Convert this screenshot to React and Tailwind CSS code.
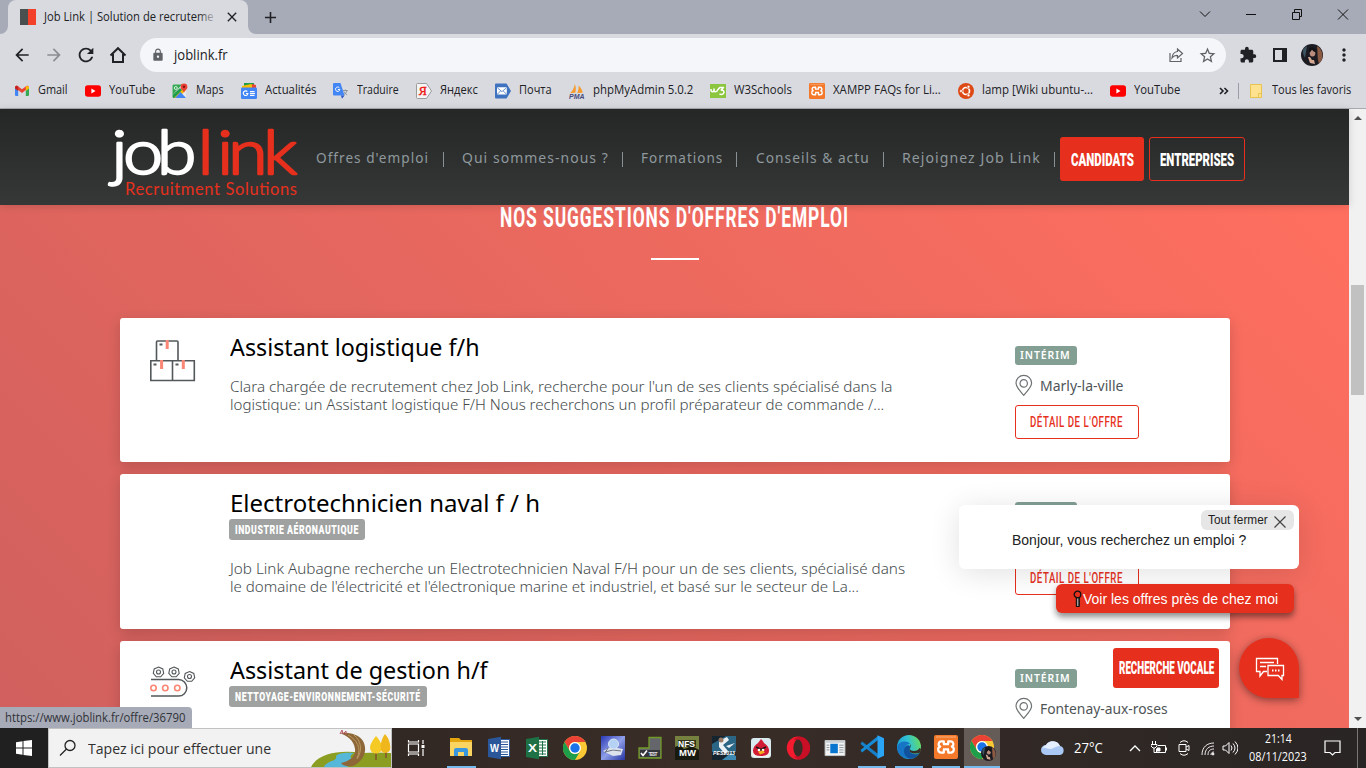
import React, { useLayoutEffect, useRef, useState } from "react";
import { MdArrowBack, MdArrowForward, MdRefresh, MdLock, MdStarBorder, MdExtension, MdMoreVert, MdAdd, MdClose } from "react-icons/md";

// Squeezes or stretches one line of text to the width of its box.
function Fit({ className = "", children }) {
  const box = useRef(null);
  const line = useRef(null);
  const [ratio, setRatio] = useState(1);
  useLayoutEffect(() => {
    setRatio(box.current.clientWidth / line.current.offsetWidth);
  }, [children]);
  return (
    <span ref={box} className={"block shrink-0 " + className}>
      <span ref={line} className="inline-block origin-left whitespace-nowrap" style={{ transform: `scaleX(${ratio})` }}>
        {children}
      </span>
    </span>
  );
}

const ChromeIcon = ({ className }) => (
  <svg viewBox="0 0 24 24" className={className}>
    <circle cx="12" cy="12" r="12" fill="#fcc934" />
    <path d="M1.6 6A12 12 0 0 1 22.4 6H12a6 6 0 0 0-5.2 9z" fill="#ea4335" />
    <path d="M1.6 6A12 12 0 0 0 12 24l5.2-9A6 6 0 0 1 6.8 15z" fill="#1e9e4a" />
    <circle cx="12" cy="12" r="6" fill="#fff" />
    <circle cx="12" cy="12" r="4.7" fill="#1a73e8" />
  </svg>
);

const XamppIcon = ({ className }) => (
  <svg viewBox="0 0 24 24" className={className}>
    <rect width="24" height="24" rx="2" fill="#f4792b" />
    <path d="M2 2h20" stroke="#f9b07c" strokeWidth="1" />
    <path d="M9.800 9.200V6.300H7.500a2.800 2.800 0 0 0-1.300 5.300 3.100 3.100 0 0 0 1 6h2.600v-3M14.200 9.200V6.300h2.300a2.800 2.800 0 0 1 1.300 5.300 3.100 3.100 0 0 1-1 6h-2.600v-3M9 9.200h6M9 14.400h6" fill="none" stroke="#fff" strokeWidth="2.200" strokeLinejoin="round" />
  </svg>
);

const YoutubeIcon = () => (
  <svg viewBox="0 0 16 16" className="size-4 shrink-0">
    <rect y="2.2" width="16" height="11.6" rx="2.8" fill="#f00" />
    <path d="M6.4 5.6v4.8L10.5 8z" fill="#fff" />
  </svg>
);

const GmailIcon = () => (
  <svg viewBox="0 0 16 16" className="size-4 shrink-0">
    <path d="M1 4.5V12a1 1 0 0 0 1 1h2.2V6.5z" fill="#4285f4" />
    <path d="M15 4.5V12a1 1 0 0 1-1 1h-2.2V6.5z" fill="#34a853" />
    <path d="M1 4.6C1 3 2.800 2.300 4 3.200l4 3 4-3c1.200-.9 3-.2 3 1.400L11.800 7 8 9.900 4.200 7z" fill="#ea4335" />
    <path d="M11.800 3.400c1.400-1 3.200-.3 3.200 1.400v.8l-3.200 2.400z" fill="#fbbc04" />
    <path d="M1 4.600v1l3.200 2.400V3.400C2.800 2.300 1 3 1 4.600z" fill="#c5221f" />
  </svg>
);

const MapsIcon = () => (
  <svg viewBox="0 0 16 16" className="size-4 shrink-0">
    <rect x=".5" y="1.500" width="13.500" height="13.500" rx="1.500" fill="#e8eaed" />
    <path d="M.5 3c0-1 .5-1.500 1.500-1.500h8L.5 12z" fill="#34a853" />
    <path d="M1.200 14.600 12.500 4l1.500 1v2L6 15H2z" fill="#fbbc04" />
    <path d="M3 15 8.500 9l5.500 6z" fill="#4285f4" />
    <path d="M.5 12 8 5l2 2-8 8c-1 0-1.500-.5-1.500-1.500z" fill="#1e9e4a" />
    <path d="M12 .5a3.400 3.400 0 0 1 3.400 3.400C15.400 6.500 12.500 7 12 10c-.5-3-3.400-3.500-3.400-6.100A3.400 3.400 0 0 1 12 .5z" fill="#ea4335" />
    <circle cx="12" cy="3.800" r="1.200" fill="#811411" />
    <circle cx="3.800" cy="5" r="1.500" fill="none" stroke="#fff" strokeWidth=".8" />
  </svg>
);

const NewsIcon = () => (
  <svg viewBox="0 0 16 16" className="size-4 shrink-0">
    <path d="M3 0h10v6H3z" fill="#1e9e4a" />
    <path d="m1 3 9-2 5 3v3H1z" fill="#fbbc04" />
    <path d="m11 1 4 1v4h-4z" fill="#ea4335" />
    <rect y="4.500" width="16" height="11.500" rx="1.300" fill="#4285f4" />
    <path d="M6.300 8.600a2.300 2.300 0 1 0 .6 1.900H5M9 8.600h4.500M9 10.500h5M9 12.400h4.500" fill="none" stroke="#fff" strokeWidth="1.200" />
  </svg>
);

const TranslateIcon = () => (
  <svg viewBox="0 0 16 16" className="size-4 shrink-0">
    <path d="M6 4h9a1 1 0 0 1 1 1v9.500a1 1 0 0 1-1 1H9z" fill="#dadce0" />
    <path d="M1 0h6.500l4 12.500H1a1 1 0 0 1-1-1V1a1 1 0 0 1 1-1z" fill="#4285f4" />
    <path d="m8 12.500 3.500 0L9 15.800z" fill="#2b55c4" />
    <path d="M6.400 4.800a2.200 2.200 0 1 0 .5 1.700h-2" fill="none" stroke="#fff" />
    <path d="M10 7.500h4.800M12.300 6.500v1M14 7.500c-.5 2-1.800 3.300-3 4M11 8.500c.6 1.600 2 2.800 3.200 3.500" fill="none" stroke="#7d8793" strokeWidth=".8" />
  </svg>
);

const YandexIcon = () => (
  <svg viewBox="0 0 16 16" className="size-4 shrink-0">
    <path d="M1.500.5h9L15.500 8l-5 7.500h-9a1 1 0 0 1-1-1v-13a1 1 0 0 1 1-1z" fill="#f4f4f4" stroke="#9b9b9b" />
    <text x="2.700" y="12.200" fontSize="12" fontWeight="400" fontFamily="Liberation Serif" fill="#e11" stroke="#e11" strokeWidth=".4">Я</text>
  </svg>
);

const MailIcon = () => (
  <svg viewBox="0 0 16 16" className="size-4 shrink-0">
    <path d="M1 .5h10.500L16 8l-4.500 7.500H1a1 1 0 0 1-1-1v-13a1 1 0 0 1 1-1z" fill="#3f73c0" />
    <rect x="2" y="4.200" width="9.800" height="7.400" rx=".8" fill="#fff" />
    <path d="m2.500 5 4.400 3.600L11.300 5M2.500 11l3-3M11.300 11l-3-3" fill="none" stroke="#3f73c0" strokeWidth=".8" />
  </svg>
);

const PmaIcon = () => (
  <svg viewBox="0 0 16 16" className="size-4 shrink-0">
    <path d="M5.800 1c1.300 3 1.200 6 .5 8.800L1 10.300C3.500 8 5.300 5 5.800 1zM9.500 2.500c2.300 2 3.700 4.500 4.200 7.200l-5.500.2c1.300-2.300 1.700-5 1.300-7.400z" fill="#f69a2c" />
    <text x="0" y="15.600" fontSize="6.500" fontStyle="italic" fontWeight="700" fontFamily="Liberation Sans" fill="#48497a" textLength="15.500" lengthAdjust="spacingAndGlyphs">PMA</text>
  </svg>
);

const W3Icon = () => (
  <svg viewBox="0 0 16 16" className="size-4 shrink-0">
    <rect y="1" width="16" height="14" fill="#8cc63f" />
    <path d="M1 6v1.300c0 2 3 2 3 0V6v1.300c0 2 3.200 2 3.800-.6l2-2.200h3.700L11.200 7c2 0 3 1 2.700 2.600-.4 2-3 2.400-4.400 1.100" fill="none" stroke="#fff" strokeWidth="1.500" strokeLinejoin="round" />
  </svg>
);

const UbuntuIcon = () => (
  <svg viewBox="0 0 16 16" className="size-4 shrink-0">
    <circle cx="8" cy="8" r="8" fill="#dd4814" />
    <circle cx="8" cy="8" r="3.500" fill="none" stroke="#fff" strokeWidth="1.700" />
    <g fill="#fff" stroke="#dd4814" strokeWidth=".7">
      <circle cx="3" cy="8" r="1.500" />
      <circle cx="10.500" cy="3.700" r="1.500" />
      <circle cx="10.500" cy="12.300" r="1.500" />
    </g>
  </svg>
);

const Portrait = ({ className }) => (
  <svg viewBox="0 0 22 22" className={className}>
    <circle cx="11" cy="11" r="11" fill="#1d1b22" />
    <path d="M16 2a11 11 0 0 1 2 17.500c-2-5-1-10-2-17.500z" fill="#8b5a43" />
    <path d="M2 6a11 11 0 0 1 4-4L4 14a11 11 0 0 1-2-8z" fill="#3b5561" />
    <ellipse cx="11.500" cy="9" rx="2.800" ry="3.600" fill="#b98c7e" />
    <path d="M8 4.500c3-2 7-1 7.500 4-2-.5-4-1.500-4.500-3-1 2-2 3-3 3z" fill="#121116" />
    <path d="m7 13 2 0 2 3 2 0 1 4-5-1z" fill="#d3a994" />
  </svg>
);

const bookmarks = [
  [GmailIcon, "Gmail", "w-[30px]"],
  [YoutubeIcon, "YouTube", "w-[46px]"],
  [MapsIcon, "Maps", "w-[28px]"],
  [NewsIcon, "Actualités", "w-[51px]"],
  [TranslateIcon, "Traduire", "w-[42px]"],
  [YandexIcon, "Яндекс", "w-[38px]"],
  [MailIcon, "Почта", "w-[33px]"],
  [PmaIcon, "phpMyAdmin 5.0.2", "w-[100px]"],
  [W3Icon, "W3Schools", "w-[58px]"],
  [() => <XamppIcon className="size-4 shrink-0" />, "XAMPP FAQs for Li...", "w-[108px]"],
  [UbuntuIcon, "lamp [Wiki ubuntu-...", "w-[111px]"],
  [YoutubeIcon, "YouTube", "w-[46px]"],
];

function Browser() {
  return (
    <div className="h-[109px] bg-[#d9dae0] font-['Open_Sans',sans-serif] text-[#202124]">
      <div className="flex h-[34px] bg-[#a7abb7]">
        <div className="relative ml-2 flex h-[34px] w-[240px] items-center rounded-t-lg bg-[#d9dae0] pl-3">
          <span className="flex size-4 shrink-0 bg-[#4a504f]"><span className="ml-auto w-2 bg-[#f2402b]" /></span>
          <Fit className="ml-2 w-[170px] bg-transparent text-[12px] leading-4">Job Link | Solution de recruteme</Fit>
          <span className="absolute left-[190px] top-2 h-5 w-5 bg-linear-to-r from-transparent to-[#d9dae0]" />
          <MdClose className="ml-[10px] size-4 shrink-0" />
          <svg viewBox="0 0 8 8" className="absolute -left-2 bottom-0 size-2"><path d="M8 0v8H0a8 8 0 0 0 8-8z" fill="#d9dae0" /></svg>
          <svg viewBox="0 0 8 8" className="absolute -right-2 bottom-0 size-2"><path d="M0 0v8h8a8 8 0 0 1-8-8z" fill="#d9dae0" /></svg>
        </div>
        <MdAdd className="ml-[13px] mt-[8px] size-[19px]" />
        <svg viewBox="0 0 170 34" className="ml-auto h-[34px] w-[170px]" fill="none" stroke="#111">
          <path d="m4 11.500 5 5 5-5M50 14.500h10M96.500 12.500h7v7h-7zM98.500 12v-2.500h7v7h-2M142 9.500l10 10M152 9.500l-10 10" />
        </svg>
      </div>
      <div className="flex h-[42px] items-center">
        <MdArrowBack className="ml-3 size-5" />
        <MdArrowForward className="ml-3 size-5 text-[#8b8d93]" />
        <MdRefresh className="ml-[11px] size-[22px]" />
        <svg viewBox="0 0 18 18" className="ml-3 size-[18px]" fill="none" stroke="#202124" strokeWidth="2"><path d="M1.500 9.500 9 2.200l7.500 7.300M4 8v8h10V8" /></svg>
        <div className="ml-[13px] flex h-[34px] w-[1086px] items-center rounded-full bg-[#f5f6f9] pl-[11px] pr-[9px]">
          <MdLock className="size-[14px] text-[#5f6368]" />
          <Fit className="ml-[9px] w-[54px] text-[14px] leading-5">joblink.fr</Fit>
          <svg viewBox="0 0 18 18" className="ml-auto size-[18px]" fill="none" stroke="#5f6368" strokeWidth="1.200"><path d="M3 7v8.500h11V12M10.500 3l5 4.500-5 4.500V9.500c-2.500-.2-4 .5-5.500 2.500.3-3.500 2-6 5.500-6.500z" /></svg>
          <MdStarBorder className="ml-[13px] size-[19px] text-[#5f6368]" />
        </div>
        <MdExtension className="ml-[13px] size-[18px]" />
        <svg viewBox="0 0 14 14" className="ml-4 size-[14px]"><path d="M1 1h12v12H1z" fill="none" stroke="#202124" strokeWidth="2" /><path d="M9 0h5v14H9z" fill="#202124" /></svg>
        <Portrait className="ml-[14px] size-[22px]" />
        <MdMoreVert className="ml-[11px] size-5" />
      </div>
      <div className="flex h-[33px] items-center border-b border-[#a9aab0] pl-[14px] pb-[3px] text-[12px] leading-4">
        <div className="flex gap-[17px]">
          {bookmarks.map(([Icon, label, width], i) => (
            <div key={i} className="flex items-center gap-2"><Icon /><Fit className={"-mt-px " + width}>{label}</Fit></div>
          ))}
        </div>
        <svg viewBox="0 0 10 8" className="ml-[39px] h-2 w-[10px]" fill="none" stroke="#202124" strokeWidth="1.600"><path d="m1 1 3 3-3 3M5.500 1l3 3-3 3" /></svg>
        <span className="ml-[9px] h-4 w-px bg-[#9b9ea8]" />
        <svg viewBox="0 0 12 14" className="ml-[11px] h-[14px] w-3"><path d="M.5.500h11v13H.500z" fill="#ffe28f" stroke="#e9c34e" /><path d="M8.500 9.500h3v4h-3z" fill="#ffe28f" stroke="#e9c34e" /></svg>
        <Fit className="-mt-px ml-[10px] w-[79px]">Tous les favoris</Fit>
      </div>
    </div>
  );
}

const nav = [
  ["Offres d'emploi", "w-[113px]", "ml-[14px] mr-[18px]"],
  ["Qui sommes-nous ?", "w-[147px]", "ml-[13px] mr-[18px]"],
  ["Formations", "w-[82px]", "ml-[13px] mr-[19px]"],
  ["Conseils & actu", "w-[114px]", "ml-[13px] mr-[18px]"],
  ["Rejoignez Job Link", "w-[139px]", "ml-[13px] mr-[5px]"],
];

function Header() {
  return (
    <header className="relative z-10 flex h-24 bg-linear-to-b from-[#252726] to-[#363837] shadow-[0_1px_8px_rgba(0,0,0,0.15)]">
      <svg viewBox="0 0 196 84" className="ml-[104px] mt-3 h-[84px] w-[196px] shrink-0 overflow-visible font-['Lato',sans-serif]">
        <g fontSize="62" fontWeight="300" strokeWidth="2.400" strokeLinejoin="round" transform="scale(1.15 1)">
          <text x="6.600 16.700 46" y="53" fill="#fff" stroke="#fff">job</text>
          <text x="81.500 98.500 108 138.500" y="53" fill="#e6301d" stroke="#e6301d">link</text>
        </g>
        <text x="21" y="74" fontSize="16.500" fill="#e6301d" textLength="172" lengthAdjust="spacing">Recruitment Solutions</text>
      </svg>
      <nav className="ml-4 mt-[38px] flex h-6 items-center font-['Noto_Sans',sans-serif] text-[13.500px] leading-5 tracking-[1px] text-[#8f999e]">
        {nav.map(([label, width, gap]) => (
          <React.Fragment key={label}>
            <Fit className={"-mt-0.5 " + width}>{label}</Fit>
            <span className={"h-[15px] w-px bg-[#8a9195] " + gap} />
          </React.Fragment>
        ))}
      </nav>
      <div className="mt-7 flex h-11 gap-[5px] font-['Roboto',sans-serif] text-[18px] font-black text-white">
        <button className="flex w-[84px] items-center justify-center rounded-[3px] bg-[#e6301d]"><Fit className="w-[63px]">CANDIDATS</Fit></button>
        <button className="flex w-[96px] items-center justify-center rounded-[3px] border border-[#e6301d]"><Fit className="w-[74px]">ENTREPRISES</Fit></button>
      </div>
    </header>
  );
}

const BoxesIcon = () => (
  <svg viewBox="0 0 46 42" className="h-[42px] w-[46px]" fill="none" stroke="#53585a" strokeWidth="1.600">
    <path d="M6.500 20.500V2q0-1 1-1h19.500q1 0 1 1v18.500M.8 20.800h43.500v19.700H.8zM22.500 21v19.500" />
    <path d="M9.500 4.500h3M3.500 24.500h3M25.500 24.500h3" strokeWidth="2" />
    <path d="M17.200 0v9M11.600 20v9M33.300 20v9" stroke="#fa8674" strokeWidth="3" />
  </svg>
);

const Nut = ({ x, y }) => (
  <g transform={`translate(${x} ${y})`}>
    <path d="M0-5 4.300-3 5.200 1.300 2.200 4.800H-2.200L-5.200 1.300-4.300-3z" />
    <circle r="2" />
  </g>
);

const ConveyorIcon = () => (
  <svg viewBox="0 0 46 34" className="mt-[3px] h-[34px] w-[46px]" fill="none" stroke="#53585a" strokeWidth="1.100">
    <Nut x={8.500} y={6} /><Nut x={24} y={6} /><Nut x={39.500} y={10.500} />
    <path d="M1 13.500h27.500a8.300 8.300 0 0 1 0 16.600H1" strokeWidth="1.500" />
    <g stroke="#fa8674" strokeWidth="1.600"><circle cx="3.500" cy="22" r="2.700" /><circle cx="15.300" cy="22" r="2.700" /><circle cx="27.300" cy="22" r="2.700" /></g>
  </svg>
);

function Card({ height, icon, title, titleWidth, tag, tagWidth, lines, city, cityWidth, action }) {
  return (
    <article className={"flex w-[1110px] shrink-0 rounded-[3px] bg-white pl-[30px] shadow-[0_4px_14px_rgba(0,0,0,0.16)] " + height}>
      <div className="w-20 shrink-0 pt-[22px]">{icon}</div>
      <div className="w-[785px] shrink-0 pt-[14px] font-['Noto_Sans',sans-serif]">
        <h3 className="h-[30px] text-[23px] leading-[30px] text-black"><Fit className={titleWidth}>{title}</Fit></h3>
        {tag && (
          <div className={"-ml-px mb-[19px] mt-px flex h-[21px] items-center justify-center rounded-[3px] bg-[#a0a2a1] font-['Roboto',sans-serif] text-[12.500px] font-black tracking-[0.8px] text-white " + tagWidth[0]}>
            <Fit className={"mt-px " + tagWidth[1]}>{tag}</Fit>
          </div>
        )}
        <div className={"text-[14.5px] font-light leading-[18px] text-[#454b4d] " + (tag ? "" : "mt-[15px]")}>
          {lines.map(([text, width]) => <Fit key={text} className={"h-[18px] " + width}>{text}</Fit>)}
        </div>
      </div>
      <div className="pt-7 font-['Noto_Sans',sans-serif]">
        <div className="flex h-[19px] w-[62px] items-center justify-center rounded-[3px] bg-[#839f94] text-[11px] font-semibold leading-4 tracking-[1px] text-white"><Fit className="-mt-px w-[51px]">INTÉRIM</Fit></div>
        <div className="mt-[9px] flex h-[22px] items-center text-[13.5px] leading-5 text-[#4f5557]">
          {city && (
            <>
              <svg viewBox="0 0 18 22" className="mr-[7px] h-[22px] w-[18px]" fill="none" stroke="#6d7274" strokeWidth="1.200"><path d="M8.700 21.400C6 17.900 1 13.400 1 9.100a7.800 7.800 0 0 1 15.600 0C16.600 13.400 11.500 17.900 8.700 21.400z" /><circle cx="8.700" cy="9.400" r="3.700" /></svg>
              <Fit className={"mt-0.5 " + cityWidth}>{city}</Fit>
            </>
          )}
        </div>
        {action && (
          <button className="mt-[9px] flex h-[34px] w-[124px] items-center rounded-[3px] border border-[#e6301d] pl-[14px] font-['Roboto',sans-serif] text-[15px] font-medium tracking-[0.8px] text-[#e6301d]"><Fit className="w-[93px]">{action}</Fit></button>
        )}
      </div>
    </article>
  );
}

function Overlays() {
  return (
    <>
      <div className="absolute left-[959px] top-[300px] h-16 w-[340px] rounded-md bg-white pr-[5px] pt-[5px] font-['Liberation_Sans',sans-serif] text-[#222] shadow-[0_4px_30px_rgba(0,0,0,0.12)]">
        <div className="ml-auto flex h-5 w-[93px] items-center rounded-md bg-[#e6e6e6] pl-[6px]">
          <Fit className="ml-px w-[60px] text-[12px] leading-4">Tout fermer</Fit>
          <svg viewBox="0 0 14 14" className="ml-[5px] mt-[3px] size-[14px]" stroke="#444" strokeWidth="1.200"><path d="m1.500 1.500 11 11M12.500 1.500l-11 11" /></svg>
        </div>
        <Fit className="ml-[53px] w-[234px] text-[14px] leading-5">Bonjour, vous recherchez un emploi ?</Fit>
      </div>
      <div className="absolute left-[1056px] top-[379px] flex h-[29px] w-[238px] items-center rounded-md bg-[#e6301d] pl-[17px] font-['Liberation_Sans',sans-serif] text-[14px] text-white shadow-[0_4px_6px_rgba(0,0,0,0.45)]">
        <svg viewBox="0 0 10 18" className="h-[18px] w-[10px]" stroke="#111"><path d="M3.300 7h3v9.500h-3z" fill="#111" /><path d="M4.800 8v8" stroke="#ddd" /><circle cx="4.500" cy="4.500" r="3.300" fill="#e6301d" strokeWidth="1.300" /></svg>
        <Fit className="mt-0.5 w-[195px]">Voir les offres près de chez moi</Fit>
      </div>
      <button className="absolute left-[1113px] top-[443px] flex h-10 w-[106px] items-center justify-center rounded-[3px] bg-[#e6301d] font-['Roboto',sans-serif] text-[17.500px] font-black text-white"><Fit className="w-[95px]">RECHERCHE VOCALE</Fit></button>
      <div className="absolute left-[1239px] top-[433px] flex size-[60px] items-center justify-center rounded-full rounded-br-[3px] bg-[#e6301d] shadow-[0_2px_8px_rgba(0,0,0,0.45)]">
        <svg viewBox="0 0 30 24" className="ml-0.5 mt-0.5 h-6 w-[30px]" fill="none" stroke="#fff" strokeWidth="1.300">
          <path d="M12 14.500H8.500L5 19v-4.500H1.500v-13h21V7" />
          <path d="M5 5.500h14M5 9.500h6" />
          <path d="M13 8.500h15.500v10H27v4l-3.700-4H13z" />
          <path d="M17 13.500h1.500M20 13.500h1.500M23 13.500h1.500" strokeWidth="1.800" />
        </svg>
      </div>
      <div className="absolute bottom-0 left-0 flex h-[21px] w-[192px] items-center rounded-tr bg-[#a7abb7] pl-[5px] font-['Open_Sans',sans-serif] text-[12px] leading-4 text-[#303238]"><Fit className="w-[180px]">https://www.joblink.fr/offre/36790</Fit></div>
    </>
  );
}

function Page() {
  return (
    <div className="w-[1349px] shrink-0">
      <Header />
      <main className="relative flex h-[523px] flex-col items-center overflow-hidden bg-[linear-gradient(45deg,#d0605e,#ff6f5f)]">
        <h2 className="h-[26px] shrink-0 font-['Roboto',sans-serif] text-[28px] font-bold leading-[26px] tracking-[1.500px] text-white"><Fit className="w-[349px]">NOS SUGGESTIONS D'OFFRES D'EMPLOI</Fit></h2>
        <div className="mt-[27px] h-0.5 w-12 shrink-0 bg-white" />
        <div className="mt-[58px] flex flex-col gap-3">
          <Card height="h-36" icon={<BoxesIcon />} title="Assistant logistique f/h" titleWidth="w-[250px]"
            lines={[["Clara chargée de recrutement chez Job Link, recherche pour l'un de ses clients spécialisé dans la", "w-[662px]"], ["logistique: un Assistant logistique F/H Nous recherchons un profil préparateur de commande /...", "w-[654px]"]]}
            city="Marly-la-ville" cityWidth="w-[83px]" action="DÉTAIL DE L'OFFRE" />
          <Card height="h-[155px]" title="Electrotechnicien naval f / h" titleWidth="w-[310px]" tag="INDUSTRIE AÉRONAUTIQUE" tagWidth={["w-[136px]", "w-[124px]"]}
            lines={[["Job Link Aubagne recherche un Electrotechnicien Naval F/H pour un de ses clients, spécialisé dans", "w-[675px]"], ["le domaine de l'électricité et l'électronique marine et industriel, et basé sur le secteur de La...", "w-[629px]"]]}
            action="DÉTAIL DE L'OFFRE" />
          <Card height="h-[155px]" icon={<ConveyorIcon />} title="Assistant de gestion h/f" titleWidth="w-[258px]" tag="NETTOYAGE-ENVIRONNEMENT-SÉCURITÉ" tagWidth={["w-[198px]", "w-[186px]"]}
            lines={[]} city="Fontenay-aux-roses" cityWidth="w-[128px]" />
        </div>
        <Overlays />
      </main>
    </div>
  );
}

const underline = "border-b-2 border-[#76b9ed]";

const FolderApp = () => <svg viewBox="0 0 22 18" className="h-[18px] w-[22px]"><path d="M0 0h9l2 2h11v15H0z" fill="#e5a50f" /><path d="M0 4h22v14H0z" fill="#fcd462" /><path d="M4 18v-6q0-2 2-2h10q2 0 2 2v6h-4v-4H8v4z" fill="#3a97dd" /></svg>;
const OfficeApp = ({ letter, color, grid }) => (
  <svg viewBox="0 0 24 24" className="size-6">
    <path d="M12 3.500h10.500v17H12z" fill="#fff" stroke={color} />
    <path d={grid ? "M14 6h7M14 9h7M14 12h7M14 15h7M14 18h7M17.500 5v14" : "M14 6h7M14 8.500h7M14 11h7M14 13.500h7M14 16h7M14 18.500h7"} stroke={color} />
    <path d="M1 3 14 .8v22.400L1 21z" fill={color} />
    <text x="3" y="16" fontFamily="Liberation Sans" fontWeight="700" fontSize="11.500" fill="#fff" textLength="9" lengthAdjust="spacingAndGlyphs">{letter}</text>
  </svg>
);
const ScannerApp = () => <svg viewBox="0 0 24 24" className="size-6"><defs><linearGradient id="scan" x1="0" y1="0" x2="1" y2="1"><stop stopColor="#2938b5" /><stop offset=".5" stopColor="#8f9fe8" /><stop offset="1" stopColor="#26339f" /></linearGradient></defs><path d="M0 0h24v24H0z" fill="url(#scan)" /><path d="m2 15 8-4 12 2-2 6-8 1z" fill="#dde2ec" /><path d="m4 16 8-2 8 1M7 12l-3 5" stroke="#6d7480" fill="none" /><circle cx="12.500" cy="8" r="5" fill="#b5d2f4" stroke="#dbe6f7" /></svg>;
const TestApp = () => <svg viewBox="0 0 24 24" className="size-6"><path d="M11 1.500h12V22H1V12h10z" fill="#65666b" stroke="#719a27" strokeWidth="1.300" /><path d="M2 14h20v7H2z" fill="#33353a" /><path d="m3 17 2 2.500 4-5" fill="none" stroke="#fff" strokeWidth="1.600" /><text x="10.500" y="19.500" fontFamily="Liberation Sans" fontWeight="700" fontSize="5" fill="#ddd" textLength="9">TEST</text></svg>;
const NfsApp = () => <svg viewBox="0 0 24 24" className="size-6"><path d="M0 0h24v24H0z" fill="#77813f" /><path d="M0 11 5 9l4 4 8-3 7 4v10H0z" fill="#181a10" /><path d="M3 4h18v7H3z" fill="#303419" /><g fontFamily="Liberation Sans" fontWeight="700" fill="#fff"><text x="3" y="11" fontSize="9" textLength="17" lengthAdjust="spacingAndGlyphs">NFS</text><text x="4" y="20" fontSize="9" textLength="17" lengthAdjust="spacingAndGlyphs">MW</text></g></svg>;
const PesApp = () => <svg viewBox="0 0 24 24" className="size-6"><path d="M0 0h24v24H0z" fill="#2b6685" /><path d="M0 0h14L0 8zM0 16h24v8H0z" fill="#152530" /><path d="m7 5 8-4 2 3-6 5 5 6-3 3-6-7zM14 10l9-3-6 5z" fill="#ecf2f6" /><circle cx="9" cy="4" r="2.500" fill="#9a7965" /><path d="m10 24 9-7 5 3v4z" fill="#3e8ab2" /><text x="1" y="19" fontFamily="Liberation Sans" fontWeight="700" fontStyle="italic" fontSize="5.500" fill="#fff" textLength="22" lengthAdjust="spacingAndGlyphs">PES2013</text></svg>;
const BirdApp = () => <svg viewBox="0 0 20 20" className="size-5"><rect width="20" height="20" rx="3" fill="#d8eaf0" /><path d="M1 13h18v4q0 2-2 2H3q-2 0-2-2z" fill="#eef2ee" /><path d="M10 1q2 2 3 4 5 3 5 8 0 5-8 5t-8-5q0-5 5-8z" fill="#d21c35" /><path d="m5 9 4 2 1 1 1-1 4-2" stroke="#251414" strokeWidth="1.600" fill="none" /><circle cx="8" cy="12" r="1.300" fill="#fff" /><circle cx="12" cy="12" r="1.300" fill="#fff" /><path d="m7 13.500 5-1 2 2-5 2z" fill="#f7ad20" /></svg>;
const OperaApp = () => <svg viewBox="0 0 24 24" className="size-6"><ellipse cx="12" cy="12" rx="11.200" ry="11.500" fill="#f51b2f" /><path d="M15 .8a11.400 11.400 0 0 1 0 22.400c-4 .5-6-1.500-7-3 7 2 8-14 0-16.400C9 2 11 .5 15 .8z" fill="#c80f26" /><ellipse cx="12" cy="12" rx="4.600" ry="8.500" fill="#3a2d27" /></svg>;
const WindowApp = () => <svg viewBox="0 0 22 18" className="h-[17px] w-[22px]"><path d="M.5.500h21v16H.500z" fill="#f4f4f4" stroke="#c7c9ca" /><path d="M1 1h20v2H1z" fill="#c9d0d5" /><path d="M6 4h8v10H6z" fill="#0876ce" /><path d="M2 5.500h3M2 8h3M2 10.500h3M15.500 5.500H20M15.500 8H20M15.500 10.500H20M15.500 13H20" stroke="#88939b" /></svg>;
const CodeApp = () => <svg viewBox="0 0 24 24" className="size-6"><path d="M2 6.500 18 19v4L.500 9z" fill="#1681ca" /><path d="M2 17.500 18 5V1L.500 15z" fill="#168bd6" /><path d="m17.500.2 6.500 3v17.600l-6.500 3z" fill="#2aa4f4" /></svg>;
const EdgeApp = () => <svg viewBox="0 0 24 24" className="size-6"><defs><linearGradient id="edge" x1="0" y1=".6" x2="1" y2=".3"><stop stopColor="#189bd8" /><stop offset=".5" stopColor="#30c1d5" /><stop offset="1" stopColor="#65dc62" /></linearGradient></defs><circle cx="12" cy="12" r="12" fill="url(#edge)" /><path d="M0 12C2 6 10 5 13 9c-7 0-7 9 0 11 4 1 7 0 9.500-2.500A12 12 0 0 1 0 12z" fill="#1675c5" /><path d="M9 11c-4 4-2 11 4 12.800A12 12 0 0 0 22.500 18c-4 2.500-9 1-10-2-.6-2 1-2.500.5-4.500-1-2-3-1.500-4-.5z" fill="#11529e" /><path d="M13 9c2 2 0 3.500 0 5 0 2.500 8 3 9.500-1l1.500 1-1 3.500c-4 2-10 1-10.500-1.500-.4-2 1.500-3 .5-7z" fill="#3a2d27" /></svg>;
const ActiveChromeApp = () => <span className="relative block size-6"><ChromeIcon className="size-6" /><Portrait className="absolute -bottom-[2px] -right-[2px] size-[15px]" /></span>;

const apps = [
  [FolderApp, "w-[38px]", "w-[29px] " + underline],
  [() => <OfficeApp letter="W" color="#2b579a" />, "w-[38px]", "w-[29px]"],
  [() => <OfficeApp letter="X" color="#1e7145" grid />, "w-[38px]", "w-[29px]"],
  [() => <ChromeIcon className="size-6" />, "w-[38px]", "w-[29px]"],
  [ScannerApp, "w-[37px]", "w-[28px]"],
  [TestApp, "w-[37px]", "w-[28px]"],
  [NfsApp, "w-[37px]", "w-[28px]"],
  [PesApp, "w-[37px]", "w-[28px]"],
  [BirdApp, "w-[37px]", "w-[28px]"],
  [OperaApp, "w-[37px]", "w-[28px]"],
  [WindowApp, "w-[37px]", "w-[28px]"],
  [CodeApp, "w-[37px]", "w-[28px] " + underline],
  [EdgeApp, "w-[37px]", "w-[28px] " + underline],
  [() => <XamppIcon className="size-6" />, "w-[37px]", "w-[28px] " + underline],
  [ActiveChromeApp, "w-[36px] bg-[#655c57]", "w-[36px] " + underline],
];

function Taskbar() {
  return (
    <footer className="flex h-10 bg-linear-to-r from-[#27211f] via-[#3a2d27] to-[#292524] font-['Open_Sans',sans-serif] text-white">
      <div className="flex w-12 items-center justify-center bg-[#202020]"><svg viewBox="0 0 16 16" className="size-4" fill="#fff"><path d="M0 2.200 6.500 1.300v6.200H0zM7.500 1.100 16 0v7.500H7.500zM0 8.500h6.500v6.200L0 13.800zM7.500 8.500H16V16l-8.500-1.100z" /></svg></div>
      <div className="flex w-[344px] items-center border border-[#c2c2c2] bg-[#f2f2f2] pl-[10px] text-[#303030]">
        <svg viewBox="0 0 18 18" className="size-[18px]" fill="none" stroke="#222" strokeWidth="1.300"><circle cx="11" cy="6.500" r="5" /><path d="m7.500 10-6.500 6.500" /></svg>
        <Fit className="ml-[11px] w-[183px] text-[15px] leading-5">Tapez ici pour effectuer une</Fit>
        <svg viewBox="0 0 80 38" className="ml-auto h-[38px] w-20">
          <path d="M0 38C8 23 31 21 51 24q16-1 29 0v14z" fill="#8b9e22" />
          <path d="M13 38c2-6 14-6 12-10-1-4 11-5 18-4-9 5 4 6-7 14z" fill="#57b7d8" />
          <path d="M29 4c8-1 19 1 23 8 5 9 1 20-10 25-7 1-11-1-12-3 9-2 15-7 14-14C43 11 36 7 29 4z" fill="#8d6737" />
          <path d="M37 6c9 5 14 13 9 23M43 6c7 6 9 15 3 24" fill="none" stroke="#b99761" />
          <path d="M65 17v14M75 17v12" stroke="#875328" strokeWidth="1.500" />
          <path d="M65 7c3 3 7 9 6 13-1 5-9 6-11 2-3-5 2-11 5-15z" fill="#f6ca24" />
          <path d="M74 5c4 4 6 11 5 16-2 4-8 4-9 0-1-6 1-12 4-16z" fill="#f0b71d" />
          <path d="m29 5 2-4 1 4 3-3v4" stroke="#b55864" fill="none" />
        </svg>
      </div>
      <div className="flex w-[50px] items-center justify-center pr-[2px]"><svg viewBox="0 0 18 16" className="h-4 w-[18px]" fill="none" stroke="#fff" strokeWidth="1.200"><path d="M1.500 4h10v8h-10zM1.500 0v2h10V0M1.500 16v-2h10v2M16 0v4M16 9v7" /><path d="M14.500 5h3v3h-3z" fill="#fff" stroke="none" /></svg></div>
      {apps.map(([Icon, cell, bar], i) => (
        <div key={i} className={"flex flex-col items-center " + cell}>
          <span className={"flex h-10 items-center justify-center " + bar}><Icon /></span>
        </div>
      ))}
      <svg viewBox="0 0 24 17" className="ml-[41px] mt-[11px] h-[17px] w-6"><path d="M5 16a5 5 0 0 1 0-10 8 8 0 0 1 14 1 4.600 4.600 0 0 1 0 9z" fill="#a9c8f4" /><path d="M5 6a8 8 0 0 1 14 1c-5 0-6 3-10 3-3 0-4-2-8-1z" fill="#e4efff" /></svg>
      <Fit className="ml-[9px] mt-[10px] w-[29px] text-[14px] leading-5">27°C</Fit>
      <svg viewBox="0 0 12 8" className="ml-[26px] mt-4 h-2 w-3" fill="none" stroke="#fff" strokeWidth="1.300"><path d="m1 7 5-5 5 5" /></svg>
      <svg viewBox="0 0 16 14" className="ml-[10px] mt-[13px] h-[14px] w-4" fill="none" stroke="#fff"><path d="M7 4.500h7.500v7h-9V8M15.500 6.500v3M1.500 0v3M4.500 0v3M0 3.500h6V5L4 7H2L0 5zM3 7v4.500h3" /><path d="M6 7h3v3H6z" fill="#fff" /></svg>
      <svg viewBox="0 0 14 16" className="ml-[10px] mt-3 h-4 w-[14px]" fill="none" stroke="#fff"><path d="M2 4.500h7v7H2zM9 7l3-1.500v5L9 9M3 2.500Q7-1 11 2.500M3 13.500q4 3.500 8 0" /></svg>
      <svg viewBox="0 0 14 14" className="ml-[10px] mt-[14px] size-[14px]" fill="none" stroke="#eee"><path d="M1 13C1 5 6 1 13 1M4 13c0-6 4-9 9-9M7 13c0-4 2-6 6-6M10 13c0-2 1-3 3-3" /><circle cx="12" cy="12" r="1" fill="#fff" /></svg>
      <svg viewBox="0 0 16 14" className="ml-[7px] mt-[13px] h-[14px] w-4" fill="none" stroke="#fff"><path d="M1 5h2.500L7 1.500v11L3.500 9H1zM9 4.500q2 2.500 0 5M11 2.500q4 4.500 0 9M13 .500q6 6.500 0 13" /></svg>
      <div className="ml-[11px] flex w-[58px] flex-col items-center pt-[2px] text-[12px] leading-[18px]"><Fit className="w-[27px]">21:14</Fit><Fit className="w-[58px]">08/11/2023</Fit></div>
      <svg viewBox="0 0 17 17" className="ml-[17px] mt-3 size-[17px]" fill="none" stroke="#fff" strokeWidth="1.200"><path d="M1 1h15v11.500h-5L8.500 15 6 12.500H1z" /></svg>
      <span className="ml-[16px] w-px bg-[#777]" />
    </footer>
  );
}

export default function App() {
  return (
    <div className="h-[768px] w-[1366px] overflow-hidden">
      <Browser />
      <div className="flex h-[619px]">
        <Page />
        <div className="flex w-[17px] flex-col items-center bg-[#f1f1f1]">
          <svg viewBox="0 0 8 4" className="mt-[7px] h-1 w-2"><path d="m0 4 4-4 4 4z" fill="#505050" /></svg>
          <div className="mt-[165px] h-[110px] w-[13px] bg-[#c1c1c1]" />
          <svg viewBox="0 0 8 4" className="mb-[7px] mt-auto h-1 w-2"><path d="m0 0 4 4 4-4z" fill="#505050" /></svg>
        </div>
      </div>
      <Taskbar />
    </div>
  );
}
